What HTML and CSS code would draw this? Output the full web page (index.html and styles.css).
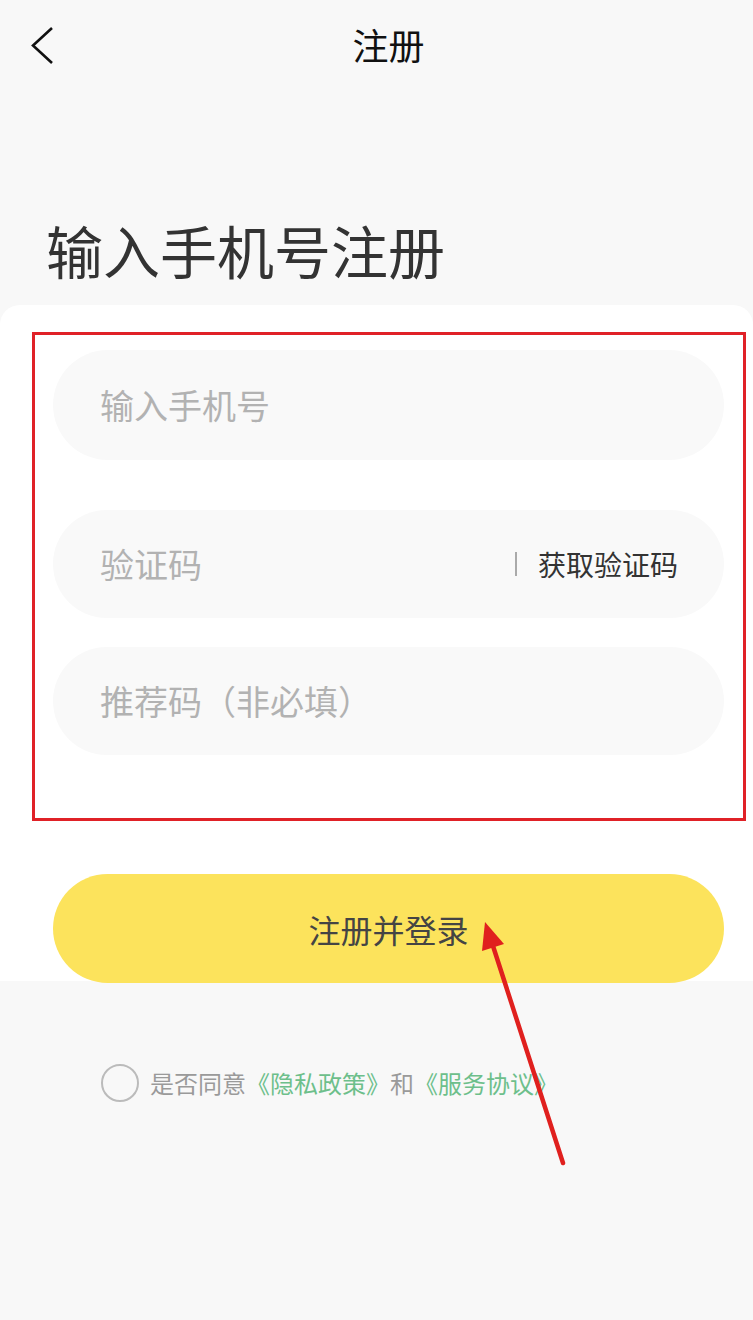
FILE: index.html
```html
<!DOCTYPE html>
<html lang="zh-CN">
<head>
<meta charset="utf-8">
<title>注册</title>
<link rel="stylesheet" href="styles.css">
</head>
<body>
<div class="page">
  <header class="topbar">
    <span class="back">
      <svg width="24" height="40" viewBox="0 0 24 40"><polyline points="21,1 2,18.5 21,36" fill="none" stroke="#111" stroke-width="2.6" stroke-linejoin="miter"/></svg>
    </span>
    <h1 class="topbar-title">注册</h1>
  </header>

  <h2 class="headline">输入手机号注册</h2>

  <section class="card">
    <div class="mark-box">
      <div class="field field-phone"><span class="placeholder">输入手机号</span></div>
      <div class="field field-code">
        <span class="placeholder">验证码</span>
        <span class="code-action"><span class="sep"></span><span class="get-code">获取验证码</span></span>
      </div>
      <div class="field field-ref"><span class="placeholder">推荐码（非必填）</span></div>
    </div>
    <button class="submit">注册并登录</button>
  </section>

  <div class="agree">
    <span class="check"></span>
    <span class="agree-text">是否同意<a class="link">《隐私政策》</a>和<a class="link">《服务协议》</a></span>
  </div>

  <svg class="arrow" width="753" height="1320" viewBox="0 0 753 1320">
    <line x1="563" y1="1163" x2="493" y2="946" stroke="#e0201e" stroke-width="4.5" stroke-linecap="round"/>
    <polygon points="485,922 504,944 482,951" fill="#e0201e"/>
  </svg>
</div>
</body>
</html>
```

FILE: styles.css
```css
* { box-sizing: border-box; }
html, body { margin: 0; padding: 0; }
body {
  background: #f8f8f8;
  font-family: "Noto Sans CJK SC", "Noto Sans", sans-serif;
}
.page {
  position: relative;
  width: 753px;
  min-height: 1320px;
  background: #f8f8f8;
}
.topbar {
  position: relative;
  height: 92px;
  display: flex;
  align-items: center;
  justify-content: center;
  padding-left: 24px;
  padding-bottom: 4px;
}
.back {
  position: absolute;
  left: 31px;
  top: 27px;
  width: 24px;
  height: 40px;
  display: block;
}
.back svg { display: block; }
.topbar-title {
  margin: 0;
  font-size: 36px;
  font-weight: 400;
  color: #111;
  line-height: 1;
}
.headline {
  margin: 129px 0 0 46px;
  font-size: 57px;
  line-height: 57px;
  height: 57px;
  font-weight: 400;
  color: #333;
  letter-spacing: 0;
}
.card {
  margin-top: 27px;
  background: #fff;
  border-radius: 20px 20px 0 0;
  padding-top: 27px;
  height: 676px;
}
.mark-box {
  margin: 0 7px 0 32px;
  border: 3px solid #e02127;
  padding: 15px 19px 63px 18px;
}
.field {
  background: #f9f9f9;
  border-radius: 56px;
  display: flex;
  align-items: center;
  justify-content: space-between;
  padding: 0 46px 0 47px;
}
.field-phone { height: 110px; }
.field-code { height: 108px; margin-top: 50px; }
.field-ref { height: 108px; margin-top: 29px; }
.placeholder {
  font-size: 34px;
  color: #b2b2b2;
  line-height: 1;
}
.code-action {
  display: flex;
  align-items: center;
}
.sep {
  width: 2px;
  height: 24px;
  background: #aaa;
  margin-right: 21px;
}
.get-code {
  font-size: 28px;
  color: #333;
  line-height: 1;
}
.submit {
  display: block;
  margin: 53px 0 0 53px;
  width: 671px;
  height: 109px;
  border: 0;
  border-radius: 55px;
  background: #fce35c;
  font-family: inherit;
  font-size: 32px;
  color: #444;
  padding: 0;
}
.agree {
  margin: 83px 0 0 101px;
  display: flex;
  align-items: center;
  height: 38px;
}
.check {
  width: 38px;
  height: 38px;
  border-radius: 50%;
  border: 2px solid #bbb;
  margin-right: 11px;
  flex: none;
}
.agree-text {
  font-size: 24px;
  color: #9a9a9a;
  line-height: 1;
}
.link { color: #6dbf8b; }
.arrow {
  position: absolute;
  left: 0;
  top: 0;
  pointer-events: none;
}
```
